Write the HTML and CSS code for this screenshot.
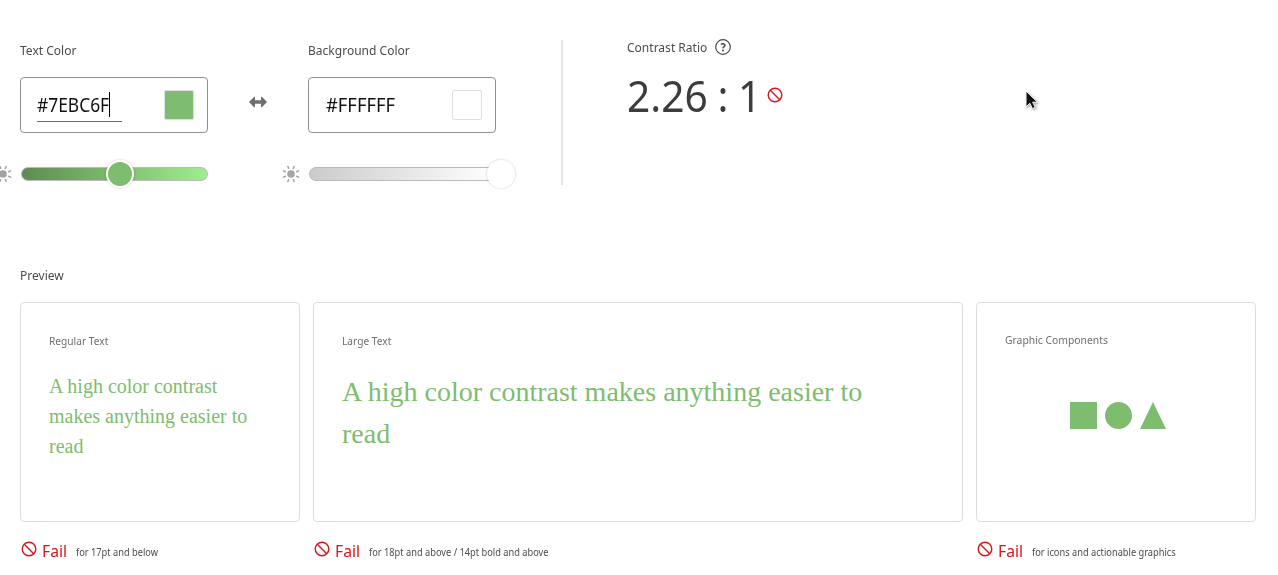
FILE: index.html
```
<!DOCTYPE html>
<html lang="en">
<head>
<meta charset="utf-8">
<title>Contrast Checker</title>
<link rel="stylesheet" href="styles.css">
</head>
<body>
<svg class="defs" width="0" height="0" aria-hidden="true">
  <symbol id="sun" viewBox="0 0 18 18">
    <circle cx="9" cy="9" r="3.8" fill="#a3a3a3"/>
    <g stroke="#a3a3a3" stroke-width="1.5" stroke-linecap="round">
      <path d="M11.3 3.4l.8-1.9M14.6 6.7l1.9-.8M14.6 11.3l1.9.8M11.3 14.6l.8 1.9M6.7 14.6l-.8 1.9M3.4 11.3l-1.9.8M3.4 6.7l-1.9-.8M6.7 3.4l-.8-1.9"/>
    </g>
  </symbol>
  <symbol id="fail" viewBox="0 0 16 16">
    <g fill="none" stroke="#d7151a" stroke-width="1.4"><circle cx="8" cy="8" r="6.8"/><path d="M3.3 3.3l9.4 9.4"/></g>
  </symbol>
</svg>
<main class="page">
  <section class="controls">
    <div class="field">
      <h2 class="label"><span class="narrow">Text Color</span></h2>
      <div class="box">
        <div class="hex focused"><span class="narrow">#7EBC6F</span><i class="caret"></i></div>
        <div class="swatch green"></div>
      </div>
      <div class="slider">
        <svg class="sun"><use href="#sun"/></svg>
        <div class="track track-green"></div>
        <div class="thumb thumb-green"></div>
      </div>
    </div>
    <svg class="swap" viewBox="0 0 18 12"><path d="M0 6L5.2 .8Q6 .3 6 1.3V4.2H12V1.3Q12 .3 12.8 .8L18 6L12.8 11.2Q12 11.7 12 10.7V7.8H6V10.7Q6 11.7 5.2 11.2Z" fill="#6e6e6e"/></svg>
    <div class="field">
      <h2 class="label"><span class="narrow">Background Color</span></h2>
      <div class="box">
        <div class="hex hex-white"><span class="narrow">#FFFFFF</span></div>
        <div class="swatch"></div>
      </div>
      <div class="slider">
        <svg class="sun"><use href="#sun"/></svg>
        <div class="track track-gray"></div>
        <div class="thumb thumb-white"></div>
      </div>
    </div>
    <div class="divider"></div>
    <div class="ratio">
      <h2 class="label ratio-label"><span class="narrow">Contrast Ratio</span>
        <svg class="help" viewBox="0 0 16 16"><circle cx="8" cy="8" r="7.3" fill="none" stroke="#4b4b4b" stroke-width="1.2"/><path d="M5.9 5.4Q7 4.6 8.3 4.7Q10 4.9 9.9 6.3Q9.8 7.2 8.8 7.9Q8 8.5 8.1 9.4" fill="none" stroke="#4b4b4b" stroke-width="1.5"/><circle cx="8" cy="11.5" r="1" fill="#4b4b4b"/></svg>
      </h2>
      <div class="value"><span class="narrow">2.26 : 1</span><svg class="fail-icon"><use href="#fail"/></svg></div>
    </div>
  </section>
  <h2 class="label preview-label"><span class="narrow">Preview</span></h2>
  <section class="cards">
    <article>
      <div class="card">
        <h3 class="card-title"><span class="narrow">Regular Text</span></h3>
        <p class="regular">A high color contrast makes anything easier to read</p>
      </div>
      <div class="result"><svg class="fail-icon"><use href="#fail"/></svg><b class="narrow verdict">Fail</b><span class="narrow note">for 17pt and below</span></div>
    </article>
    <article>
      <div class="card">
        <h3 class="card-title"><span class="narrow">Large Text</span></h3>
        <p class="large">A high color contrast makes anything easier to read</p>
      </div>
      <div class="result"><svg class="fail-icon"><use href="#fail"/></svg><b class="narrow verdict">Fail</b><span class="narrow note">for 18pt and above / 14pt bold and above</span></div>
    </article>
    <article>
      <div class="card">
        <h3 class="card-title raised"><span class="narrow wider">Graphic Components</span></h3>
        <svg class="shapes" viewBox="0 0 97 27" fill="#7ebc6f"><path d="M0 0H27V27H0Z"/><circle cx="48.5" cy="13.5" r="13.5"/><path d="M83 0L96 27H70Z"/></svg>
      </div>
      <div class="result"><svg class="fail-icon"><use href="#fail"/></svg><b class="narrow verdict">Fail</b><span class="narrow note">for icons and actionable graphics</span></div>
    </article>
  </section>
</main>
<svg class="pointer" viewBox="0 0 14 20"><path d="M1 1V17L4.8 13.3L7.4 18.7L10.3 17.3L7.7 12.2H12.5Z" fill="#111" stroke="#fff" stroke-width="1"/></svg>
</body>
</html>
```
FILE: styles.css
```
* { box-sizing: border-box; }
body {
  margin: 0;
  width: 1278px;
  height: 575px;
  overflow: hidden;
  background: #fff;
  color: #4b4b4b;
  font-family: "Noto Sans", "Open Sans", sans-serif;
}
.defs { position: absolute; }
.page { padding: 40px 22px 0 20px; }
h2, h3, p { margin: 0; font-weight: 400; }
.narrow { display: inline-block; white-space: nowrap; transform: scaleX(.925); transform-origin: 0 50%; }
.wider { transform: scaleX(.94); }
.label { height: 20px; font-size: 13px; line-height: 20px; }
.controls { display: flex; height: 225px; }
.field { width: 188px; }
.box {
  display: flex;
  justify-content: space-between;
  width: 188px;
  height: 56px;
  margin-top: 17px;
  padding: 12px 13px 0 16px;
  border: 1px solid #909090;
  border-radius: 4px;
}
.hex { display: flex; width: 85px; height: 32px; color: #111; font-size: 19px; line-height: 30px; }
.hex .narrow { width: 72px; transform: scaleX(.915); }
.hex-white { padding-left: 1px; }
.hex-white .narrow { transform: scaleX(.965); }
.focused { border-bottom: 1px solid #2c72d8; }
.caret { width: 1px; height: 25px; margin-top: 2px; background: #000; }
.swatch { width: 30px; height: 30px; border: 1px solid #e0e0e0; border-radius: 2px; }
.green { background: #7ebc6f; }
.slider { position: relative; display: flex; align-items: center; height: 30px; margin-top: 26px; }
.sun { flex: none; width: 18px; height: 18px; margin-left: -26px; }
.track { flex: none; width: 187px; height: 14px; margin-left: 9px; border: 1px solid #b9b9b9; border-radius: 7px; }
.track-green { background: linear-gradient(90deg, #5e8b52, #7ebc6f 50%, #a0ee8d); }
.track-gray { background: linear-gradient(90deg, #cbcbcb, #fff); }
.thumb { position: absolute; top: 1px; width: 28px; height: 28px; border: 2px solid #fff; border-radius: 50%; box-shadow: 0 0 2px 1px rgba(0, 0, 0, .1); }
.thumb-green { left: 86px; background: #7ebc6f; }
.thumb-white { left: 179px; background: #fff; }
.swap { width: 18px; height: 12px; margin: 56px 41px 0; }
.divider { width: 2px; height: 145px; margin-left: 65px; background: #e4e4e4; }
.ratio { margin-left: 64px; }
.ratio-label { display: flex; align-items: center; margin-top: -3px; }
.ratio-label .narrow { width: 88px; }
.help { width: 16px; height: 16px; }
.value { display: flex; align-items: center; height: 76px; color: #3c3c3c; font-size: 44px; line-height: 76px; }
.value .narrow { width: 140px; word-spacing: -1px; }
.fail-icon { flex: none; width: 16px; height: 16px; }
.preview-label { margin-bottom: 17px; }
.cards { display: grid; grid-template-columns: 280px 650px 280px; gap: 13px; }
.card { height: 220px; padding: 28px; border: 1px solid #dcdcdc; border-radius: 4px; }
.card-title { height: 20px; color: #6e6e6e; font-size: 11px; line-height: 20px; }
.raised { margin-top: -1px; }
.regular, .large { color: #7ebc6f; font-family: "Liberation Serif", serif; }
.regular { width: 200px; margin-top: 20px; font-size: 20px; line-height: 30px; }
.large { width: 560px; margin-top: 20px; font-size: 28px; line-height: 42px; }
.shapes { display: block; width: 97px; height: 27px; margin: 52px 0 0 65px; }
.result { display: flex; align-items: center; height: 26px; margin-top: 15px; padding-left: 1px; }
.result .fail-icon { margin-top: -2px; }
.verdict { width: 34px; margin-left: 5px; color: #d7151a; font-size: 17px; font-weight: 400; }
.note { font-size: 10px; margin-top: 3px; }
.pointer { position: absolute; top: 90px; left: 1025px; width: 14px; height: 20px; filter: drop-shadow(1px 1px 1px rgba(0, 0, 0, .4)); }
```
